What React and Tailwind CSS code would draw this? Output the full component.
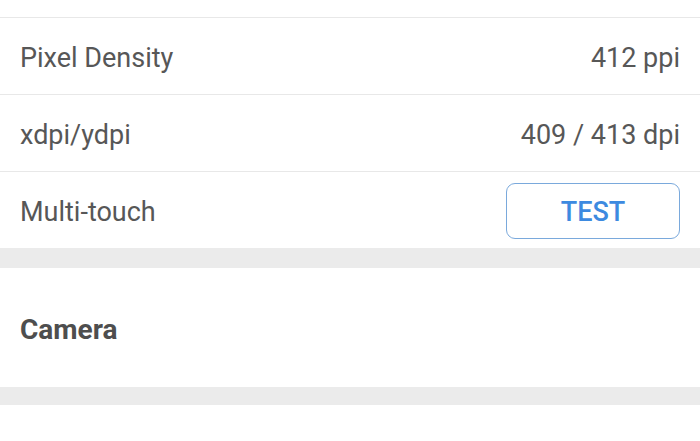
import React from "react";

const rows = [
  { label: "Pixel Density", value: "412 ppi" },
  { label: "xdpi/ydpi", value: "409 / 413 dpi" },
];

const App = () => {
  return (
    <div
      className="w-[700px] h-[441px] overflow-hidden bg-white text-[#575757]"
      style={{ fontFamily: "Roboto, 'Liberation Sans', sans-serif" }}
    >
      <div className="h-[17px]" />

      {/* Lignes d'info */}
      {rows.map((row) => (
        <div
          key={row.label}
          className="h-[77px] border-t border-[#e8e8e8] flex items-center justify-between px-5 pt-1 text-[27px]"
        >
          <span>{row.label}</span>
          <span>{row.value}</span>
        </div>
      ))}

      <div className="h-[77px] border-t border-[#e8e8e8] flex items-center justify-between px-5 text-[27px]">
        <span className="mt-1">Multi-touch</span>
        <button className="w-[174px] h-[56px] mt-[2px] pt-[2px] rounded-[9px] border border-[#7aa9dc] text-[#3d8ae0] font-medium text-[27px]">
          TEST
        </button>
      </div>

      <div className="h-[20px] bg-[#ebebeb]" />

      <div className="h-[119px] flex items-center px-5 pt-1">
        <h2 className="text-[28px] font-bold text-[#4e4e4e]">Camera</h2>
      </div>

      <div className="h-[18px] bg-[#ebebeb]" />
    </div>
  );
};

export default App;
